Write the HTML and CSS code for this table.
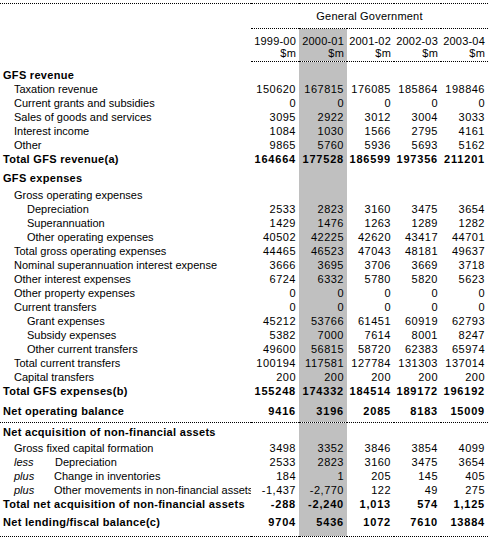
FILE: index.html
```html
<!DOCTYPE html>
<html lang="en">
<head>
<meta charset="utf-8">
<title>General Government GFS</title>
<link rel="stylesheet" href="styles.css">
</head>
<body>
<table class="gfs">
<colgroup>
<col class="col-label"><col class="col-n1"><col class="col-n2"><col class="col-n3"><col class="col-n4"><col class="col-n5">
</colgroup>
<thead>
<tr class="r-title"><th class="lbl"></th><th colspan="5" class="title">General Government</th></tr>
<tr class="r-years"><th class="lbl"></th><th>1999-00</th><th class="hl">2000-01</th><th>2001-02</th><th>2002-03</th><th>2003-04</th></tr>
<tr class="r-units"><th class="lbl"></th><th>$m</th><th class="hl">$m</th><th>$m</th><th>$m</th><th>$m</th></tr>
</thead>
<tbody>
<tr class="sp"><td class="lbl"></td><td></td><td class="hl"></td><td></td><td></td><td></td></tr>
<tr class="b"><td class="lbl">GFS revenue</td><td></td><td class="hl"></td><td></td><td></td><td></td></tr>
<tr><td class="lbl i1">Taxation revenue</td><td>150620</td><td class="hl">167815</td><td>176085</td><td>185864</td><td>198846</td></tr>
<tr><td class="lbl i1">Current grants and subsidies</td><td>0</td><td class="hl">0</td><td>0</td><td>0</td><td>0</td></tr>
<tr><td class="lbl i1">Sales of goods and services</td><td>3095</td><td class="hl">2922</td><td>3012</td><td>3004</td><td>3033</td></tr>
<tr><td class="lbl i1">Interest income</td><td>1084</td><td class="hl">1030</td><td>1566</td><td>2795</td><td>4161</td></tr>
<tr><td class="lbl i1">Other</td><td>9865</td><td class="hl">5760</td><td>5936</td><td>5693</td><td>5162</td></tr>
<tr class="b"><td class="lbl">Total GFS revenue(a)</td><td>164664</td><td class="hl">177528</td><td>186599</td><td>197356</td><td>211201</td></tr>
<tr class="sp-s"><td class="lbl"></td><td></td><td class="hl"></td><td></td><td></td><td></td></tr>
<tr class="b r-head"><td class="lbl">GFS expenses</td><td></td><td class="hl"></td><td></td><td></td><td></td></tr>
<tr><td class="lbl i1">Gross operating expenses</td><td></td><td class="hl"></td><td></td><td></td><td></td></tr>
<tr><td class="lbl i2">Depreciation</td><td>2533</td><td class="hl">2823</td><td>3160</td><td>3475</td><td>3654</td></tr>
<tr><td class="lbl i2">Superannuation</td><td>1429</td><td class="hl">1476</td><td>1263</td><td>1289</td><td>1282</td></tr>
<tr><td class="lbl i2">Other operating expenses</td><td>40502</td><td class="hl">42225</td><td>42620</td><td>43417</td><td>44701</td></tr>
<tr><td class="lbl i1">Total gross operating expenses</td><td>44465</td><td class="hl">46523</td><td>47043</td><td>48181</td><td>49637</td></tr>
<tr><td class="lbl i1">Nominal superannuation interest expense</td><td>3666</td><td class="hl">3695</td><td>3706</td><td>3669</td><td>3718</td></tr>
<tr><td class="lbl i1">Other interest expenses</td><td>6724</td><td class="hl">6332</td><td>5780</td><td>5820</td><td>5623</td></tr>
<tr><td class="lbl i1">Other property expenses</td><td>0</td><td class="hl">0</td><td>0</td><td>0</td><td>0</td></tr>
<tr><td class="lbl i1">Current transfers</td><td>0</td><td class="hl">0</td><td>0</td><td>0</td><td>0</td></tr>
<tr><td class="lbl i2">Grant expenses</td><td>45212</td><td class="hl">53766</td><td>61451</td><td>60919</td><td>62793</td></tr>
<tr><td class="lbl i2">Subsidy expenses</td><td>5382</td><td class="hl">7000</td><td>7614</td><td>8001</td><td>8247</td></tr>
<tr><td class="lbl i2">Other current transfers</td><td>49600</td><td class="hl">56815</td><td>58720</td><td>62383</td><td>65974</td></tr>
<tr><td class="lbl i1">Total current transfers</td><td>100194</td><td class="hl">117581</td><td>127784</td><td>131303</td><td>137014</td></tr>
<tr><td class="lbl i1">Capital transfers</td><td>200</td><td class="hl">200</td><td>200</td><td>200</td><td>200</td></tr>
<tr class="b"><td class="lbl">Total GFS expenses(b)</td><td>155248</td><td class="hl">174332</td><td>184514</td><td>189172</td><td>196192</td></tr>
<tr class="sp"><td class="lbl"></td><td></td><td class="hl"></td><td></td><td></td><td></td></tr>
<tr class="b ruled r-netop"><td class="lbl">Net operating balance</td><td>9416</td><td class="hl">3196</td><td>2085</td><td>8183</td><td>15009</td></tr>
<tr class="sp-xs"><td class="lbl"></td><td></td><td class="hl"></td><td></td><td></td><td></td></tr>
<tr class="b r-head2"><td class="lbl">Net acquisition of non-financial assets</td><td></td><td class="hl"></td><td></td><td></td><td></td></tr>
<tr><td class="lbl i1">Gross fixed capital formation</td><td>3498</td><td class="hl">3352</td><td>3846</td><td>3854</td><td>4099</td></tr>
<tr><td class="lbl i1"><span class="op">less</span><span class="op-txt">Depreciation</span></td><td>2533</td><td class="hl">2823</td><td>3160</td><td>3475</td><td>3654</td></tr>
<tr><td class="lbl i1"><span class="op">plus</span>Change in inventories</td><td>184</td><td class="hl">1</td><td>205</td><td>145</td><td>405</td></tr>
<tr><td class="lbl i1"><span class="op">plus</span>Other movements in non-financial assets</td><td>-1,437</td><td class="hl">-2,770</td><td>122</td><td>49</td><td>275</td></tr>
<tr class="b"><td class="lbl">Total net acquisition of non-financial assets</td><td>-288</td><td class="hl">-2,240</td><td>1,013</td><td>574</td><td>1,125</td></tr>
<tr class="sp-m"><td class="lbl"></td><td></td><td class="hl"></td><td></td><td></td><td></td></tr>
<tr class="b ruled r-netlend"><td class="lbl">Net lending/fiscal balance(c)</td><td>9704</td><td class="hl">5436</td><td>1072</td><td>7610</td><td>13884</td></tr>
</tbody>
</table>
</body>
</html>
```

FILE: styles.css
```css
html, body {
  margin: 0;
  padding: 0;
  background: #ffffff;
}

body {
  padding-top: 3px;
}

.gfs {
  width: 488px;
  table-layout: fixed;
  border-collapse: collapse;
  font-family: "Liberation Sans", Arial, sans-serif;
  font-size: 11px;
  color: #000000;
}

.col-label { width: 251px; }
.col-n1 { width: 48px; }
.col-n2 { width: 48px; }
.col-n3 { width: 47px; }
.col-n4 { width: 47px; }
.col-n5 { width: 47px; }

.gfs th,
.gfs td {
  padding: 0 3px 0 0;
  height: 14px;
  line-height: 14px;
  text-align: right;
  white-space: nowrap;
  overflow: hidden;
  font-weight: normal;
  vertical-align: middle;
  letter-spacing: 0.5px;
}

.gfs .lbl {
  text-align: left;
  padding: 0 0 0 3px;
  overflow: hidden;
  text-overflow: clip;
  letter-spacing: 0;
}

.gfs .i1 { padding-left: 14px; }
.gfs .i2 { padding-left: 27px; }

.gfs .hl { background: #c0c0c0; }

.gfs thead th {
  letter-spacing: 0.2px;
}

.r-title th {
  border-top: 1px dotted #000;
  height: 24px;
  line-height: 24px;
}

.r-title .title {
  text-align: center;
  padding: 0;
  border-bottom: 1px dotted #000;
}

.r-years th {
  height: 19px;
  line-height: 14px;
  vertical-align: bottom;
}

.r-units th {
  height: 13px;
  line-height: 11px;
  vertical-align: top;
}

.r-units th:not(.lbl) {
  border-bottom: 1px dotted #000;
}

.sp td { height: 6px; line-height: 6px; }
.sp-s td { height: 5px; line-height: 5px; }
.sp-m td { height: 4px; line-height: 4px; }
.sp-xs td { height: 2px; line-height: 2px; }

.b td {
  font-weight: bold;
  letter-spacing: 0.8px;
}

.b td.lbl {
  letter-spacing: 0.3px;
}

.r-head td {
  height: 17px;
  line-height: 14px;
  vertical-align: top;
}

.r-head2 td {
  height: 16px;
  line-height: 14px;
  vertical-align: top;
}

.ruled td { border-bottom: 1px dotted #000; }

.r-netop td {
  height: 18px;
  line-height: 14px;
  vertical-align: top;
}

.r-netlend td {
  height: 21px;
  line-height: 14px;
  vertical-align: top;
}

.op {
  display: inline-block;
  width: 40px;
  font-style: italic;
}

.op-txt { padding-left: 1px; }
```
